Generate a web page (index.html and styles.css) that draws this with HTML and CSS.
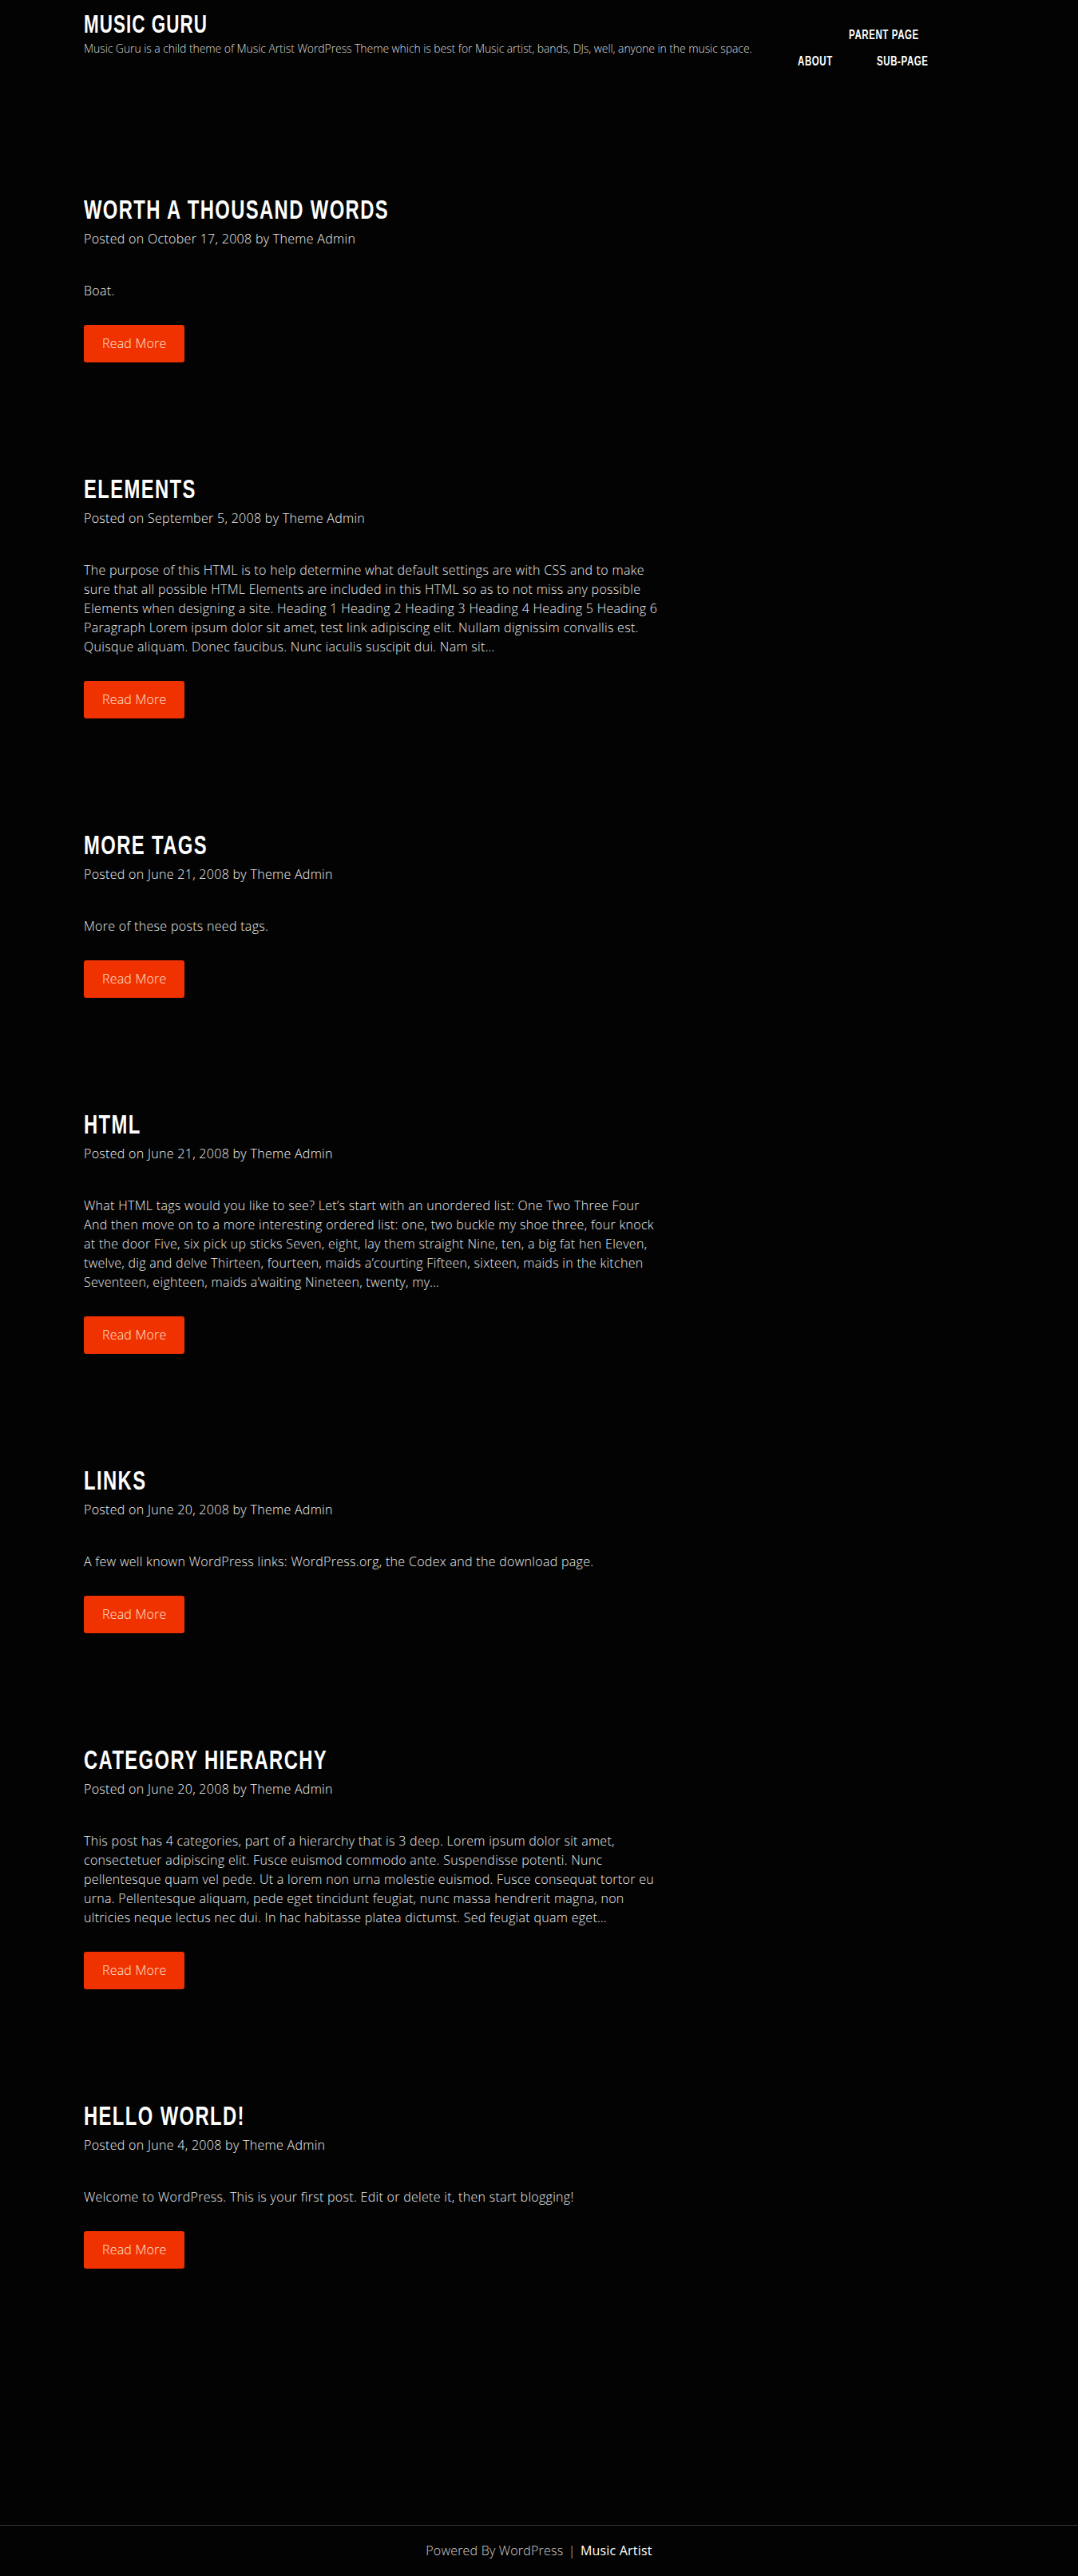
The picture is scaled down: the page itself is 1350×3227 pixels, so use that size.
FILE: index.html
```html
<!DOCTYPE html>
<html lang="en">
<head>
<meta charset="utf-8">
<title>Music Guru</title>
<link rel="stylesheet" href="styles.css">
</head>
<body>
<header class="site-header">
  <div class="container header-inner">
    <div class="branding">
      <h1 class="site-title"><a href="#">Music Guru</a></h1>
      <p class="site-description">Music Guru is a child theme of Music Artist WordPress Theme which is best for Music artist, bands, DJs, well, anyone in the music space.</p>
    </div>
    <nav class="main-nav">
      <div class="nav-row nav-row-top"><a class="nav-link" href="#">Parent Page</a></div>
      <div class="nav-row nav-row-bottom"><a class="nav-link" href="#">About</a><a class="nav-link" href="#">Sub-page</a></div>
    </nav>
  </div>
</header>

<main class="site-main">
  <div class="container">
    <div class="content-col">
      <article class="post">
        <h2 class="entry-title"><a href="#">Worth A Thousand Words</a></h2>
        <div class="entry-meta">Posted on October 17, 2008 by Theme Admin</div>
        <div class="entry-summary"><p>Boat.</p></div>
        <a class="read-more" href="#">Read More</a>
      </article>

      <article class="post">
        <h2 class="entry-title"><a href="#">Elements</a></h2>
        <div class="entry-meta">Posted on September 5, 2008 by Theme Admin</div>
        <div class="entry-summary"><p>The purpose of this HTML is to help determine what default settings are with CSS and to make sure that all possible HTML Elements are included in this HTML so as to not miss any possible Elements when designing a site. Heading 1 Heading 2 Heading 3 Heading 4 Heading 5 Heading 6 Paragraph Lorem ipsum dolor sit amet, test link adipiscing elit. Nullam dignissim convallis est. Quisque aliquam. Donec faucibus. Nunc iaculis suscipit dui. Nam sit&hellip;</p></div>
        <a class="read-more" href="#">Read More</a>
      </article>

      <article class="post">
        <h2 class="entry-title"><a href="#">More Tags</a></h2>
        <div class="entry-meta">Posted on June 21, 2008 by Theme Admin</div>
        <div class="entry-summary"><p>More of these posts need tags.</p></div>
        <a class="read-more" href="#">Read More</a>
      </article>

      <article class="post">
        <h2 class="entry-title"><a href="#">HTML</a></h2>
        <div class="entry-meta">Posted on June 21, 2008 by Theme Admin</div>
        <div class="entry-summary"><p>What HTML tags would you like to see? Let&rsquo;s start with an unordered list: One Two Three Four And then move on to a more interesting ordered list: one, two buckle my shoe three, four knock at the door Five, six pick up sticks Seven, eight, lay them straight Nine, ten, a big fat hen Eleven, twelve, dig and delve Thirteen, fourteen, maids a&rsquo;courting Fifteen, sixteen, maids in the kitchen Seventeen, eighteen, maids a&rsquo;waiting Nineteen, twenty, my&hellip;</p></div>
        <a class="read-more" href="#">Read More</a>
      </article>

      <article class="post">
        <h2 class="entry-title"><a href="#">Links</a></h2>
        <div class="entry-meta">Posted on June 20, 2008 by Theme Admin</div>
        <div class="entry-summary"><p>A few well known WordPress links: WordPress.org, the Codex and the download page.</p></div>
        <a class="read-more" href="#">Read More</a>
      </article>

      <article class="post">
        <h2 class="entry-title"><a href="#">Category Hierarchy</a></h2>
        <div class="entry-meta">Posted on June 20, 2008 by Theme Admin</div>
        <div class="entry-summary"><p>This post has 4 categories, part of a hierarchy that is 3 deep. Lorem ipsum dolor sit amet, consectetuer adipiscing elit. Fusce euismod commodo ante. Suspendisse potenti. Nunc pellentesque quam vel pede. Ut a lorem non urna molestie euismod. Fusce consequat tortor eu urna. Pellentesque aliquam, pede eget tincidunt feugiat, nunc massa hendrerit magna, non ultricies neque lectus nec dui. In hac habitasse platea dictumst. Sed feugiat quam eget&hellip;</p></div>
        <a class="read-more" href="#">Read More</a>
      </article>

      <article class="post">
        <h2 class="entry-title"><a href="#">Hello world!</a></h2>
        <div class="entry-meta">Posted on June 4, 2008 by Theme Admin</div>
        <div class="entry-summary"><p>Welcome to WordPress. This is your first post. Edit or delete it, then start blogging!</p></div>
        <a class="read-more" href="#">Read More</a>
      </article>
    </div>
  </div>
</main>

<footer class="site-footer">
  <p class="site-info">Powered By WordPress <span class="sep">|</span> <a href="#">Music Artist</a></p>
</footer>
</body>
</html>
```

FILE: styles.css
```css
* {
  box-sizing: border-box;
}

html, body {
  margin: 0;
  padding: 0;
}

body {
  background: #030303;
  color: #f0f0f0;
  font-family: "Open Sans", "Liberation Sans", Arial, sans-serif;
  font-weight: 300;
  font-size: 16px;
  line-height: 24px;
  letter-spacing: 0.3px;
}

a {
  color: inherit;
  text-decoration: none;
}

.container {
  width: 1170px;
  margin: 0 auto;
  padding: 0 15px;
}

/* Condensed display type (Oswald-like): bold sans narrowed horizontally */
.site-title,
.entry-title,
.nav-link {
  font-family: "Liberation Sans", Arial, sans-serif;
  font-weight: 700;
  text-transform: uppercase;
  color: #fff;
  white-space: nowrap;
}

/* Header */
.site-header {
  padding-top: 12px;
}

.header-inner {
  display: flex;
  align-items: flex-start;
}

.branding {
  flex: 1;
}

.site-title {
  margin: 0;
  font-size: 32px;
  line-height: 36px;
  letter-spacing: 1.5px;
  transform: scaleX(0.7);
  transform-origin: left top;
}

.site-description {
  margin: 3px 0 0;
  font-size: 14px;
  line-height: 20px;
  font-weight: 300;
  color: #dcdcdc;
  letter-spacing: -0.08px;
}

.main-nav {
  width: 164px;
  margin-right: 82px;
  margin-top: 21px;
}

.nav-row {
  display: flex;
}

.nav-row-top {
  padding-left: 64px;
}

.nav-row-bottom {
  margin-top: 13px;
  display: grid;
  grid-template-columns: 99px auto;
}

.nav-link {
  display: block;
  font-size: 16.5px;
  line-height: 20px;
  letter-spacing: 0.8px;
  transform: scaleX(0.7);
  transform-origin: left top;
}

/* Posts */
.site-main {
  padding-top: 156px;
  padding-bottom: 183px;
}

.content-col {
  width: 722px;
}

.post {
  margin-bottom: 138px;
}

.entry-title {
  margin: 0;
  font-size: 34px;
  line-height: 40px;
  letter-spacing: 2px;
  transform: scaleX(0.7);
  transform-origin: left top;
}

.entry-meta {
  margin-top: 5px;
  color: #f2f2f2;
}

.entry-summary {
  margin-top: 41px;
}

.entry-summary p {
  margin: 0;
  color: #ececec;
}

.read-more {
  display: inline-block;
  margin-top: 31px;
  padding: 12px 23px;
  line-height: 23px;
  background: #f03200;
  color: #ffe9dc;
  border-radius: 3px;
  font-weight: 300;
  letter-spacing: 0.2px;
}

/* Footer */
.site-footer {
  border-top: 1px solid #333;
  padding: 19px 0 21px;
  text-align: center;
}

.site-info {
  margin: 0;
  color: #d2d2d2;
  letter-spacing: 0.2px;
}

.site-info .sep {
  margin: 0 2px;
}

.site-info a {
  color: #fff;
  font-weight: 400;
}
```
